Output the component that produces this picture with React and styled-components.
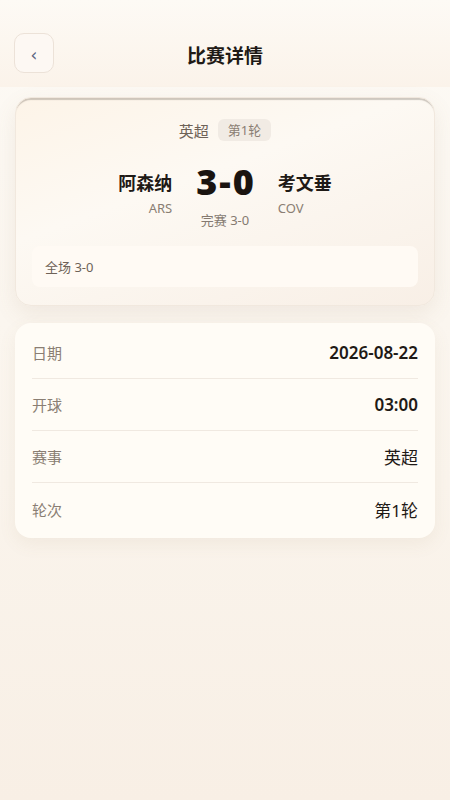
import React from "react";
import styled, { createGlobalStyle } from "styled-components";

const Global = createGlobalStyle`
  html, body { margin: 0; padding: 0; }
  body {
    font-family: "Noto Sans", "Noto Sans CJK SC", sans-serif;
    background: linear-gradient(180deg, #fdfaf5 0%, #faf4ec 60%, #f8efe5 100%);
    min-height: 800px;
    color: #1f1a16;
  }
`;

const Page = styled.div`
  min-height: 800px;
  display: flex;
  flex-direction: column;
`;

const Header = styled.header`
  height: 87px;
  box-sizing: border-box;
  padding: 33px 14px 0;
  display: grid;
  grid-template-columns: 40px 1fr 40px;
  align-items: start;
  background: linear-gradient(180deg, #fdfaf5 0%, #fbf3ea 100%);
`;

const BackButton = styled.button`
  width: 40px;
  height: 40px;
  box-sizing: border-box;
  border: 1px solid #ece2d8;
  border-radius: 10px;
  background: #fdf8f3;
  color: #5b6680;
  font-size: 17px;
  line-height: 1;
  padding: 5px 0 0;
  display: flex;
  align-items: center;
  justify-content: center;
  font-family: "DejaVu Sans", sans-serif;
`;

const Title = styled.h1`
  margin: 3px 0 0;
  height: 40px;
  line-height: 40px;
  text-align: center;
  font-size: 19px;
  font-weight: 700;
  color: #1f1a16;
`;

const Content = styled.main`
  padding: 10px 15px;
  display: flex;
  flex-direction: column;
  gap: 17px;
`;

const ScoreCard = styled.section`
  border-radius: 16px;
  background: linear-gradient(160deg, #fdf4e8 0%, #fdf9f3 40%, #f8efe6 100%);
  border: 1px solid #f1e8de;
  box-shadow: inset 0 3px 1px -1px rgba(120, 108, 96, 0.35), 0 8px 22px rgba(140, 110, 80, 0.1);
  padding: 21px 16px 18px;
  display: flex;
  flex-direction: column;
  align-items: center;
`;

const LeagueRow = styled.div`
  display: flex;
  align-items: center;
  gap: 9px;
  height: 22px;
`;

const League = styled.span`
  font-size: 15px;
  color: #6e6257;
`;

const Chip = styled.span`
  font-size: 13px;
  color: #8a7e73;
  background: #f1ebe4;
  border-radius: 6px;
  padding: 1px 10px;
  line-height: 20px;
`;

const TeamsRow = styled.div`
  margin-top: 19px;
  display: grid;
  grid-template-columns: 1fr auto 1fr;
  column-gap: 22px;
  width: 100%;
  align-items: start;
`;

const Team = styled.div`
  display: flex;
  flex-direction: column;
  align-items: ${(p) => (p.$side === "left" ? "flex-end" : "flex-start")};
`;

const TeamName = styled.div`
  font-size: 18px;
  font-weight: 700;
  line-height: 26px;
  margin-top: 10px;
  color: #1f1a16;
`;

const TeamCode = styled.div`
  font-size: 13px;
  line-height: 18px;
  color: #8a7e73;
  margin-top: 3px;
`;

const ScoreBox = styled.div`
  display: flex;
  flex-direction: column;
  align-items: center;
`;

const Score = styled.div`
  font-size: 36px;
  font-weight: 900;
  line-height: 44px;
  letter-spacing: 2px;
  padding-left: 2px;
  color: #1a1410;
  font-family: "Noto Sans", sans-serif;
`;

const Status = styled.div`
  font-size: 13px;
  line-height: 18px;
  color: #857a70;
  margin-top: 7px;
`;

const SummaryBox = styled.div`
  margin-top: 17px;
  align-self: stretch;
  background: #fffaf4;
  border-radius: 8px;
  padding: 0 13px;
  height: 41px;
  display: flex;
  align-items: center;
  font-size: 13px;
  color: #6e6257;
`;

const InfoCard = styled.section`
  border-radius: 16px;
  background: #fffcf6;
  box-shadow: 0 6px 18px rgba(140, 110, 80, 0.08);
  padding: 4px 17px 3px;
`;

const InfoRow = styled.div`
  height: 52px;
  box-sizing: border-box;
  display: flex;
  align-items: center;
  justify-content: space-between;
  border-bottom: 1px solid #f0e9e1;
  &:last-child { border-bottom: none; }
`;

const Label = styled.span`
  font-size: 15px;
  color: #8a7e73;
`;

const Value = styled.span`
  font-size: 17px;
  font-weight: ${(p) => (p.$strong ? 600 : 400)};
  color: #1f1a16;
`;

const rows = [
  { label: "日期", value: "2026-08-22", strong: true },
  { label: "开球", value: "03:00", strong: true },
  { label: "赛事", value: "英超" },
  { label: "轮次", value: "第1轮" },
];

export default function App() {
  return (
    <Page>
      <Global />
      <Header>
        <BackButton aria-label="返回">‹</BackButton>
        <Title>比赛详情</Title>
        <span />
      </Header>
      <Content>
        <ScoreCard>
          <LeagueRow>
            <League>英超</League>
            <Chip>第1轮</Chip>
          </LeagueRow>
          <TeamsRow>
            <Team $side="left">
              <TeamName>阿森纳</TeamName>
              <TeamCode>ARS</TeamCode>
            </Team>
            <ScoreBox>
              <Score>3-0</Score>
              <Status>完赛 3-0</Status>
            </ScoreBox>
            <Team $side="right">
              <TeamName>考文垂</TeamName>
              <TeamCode>COV</TeamCode>
            </Team>
          </TeamsRow>
          <SummaryBox>全场 3-0</SummaryBox>
        </ScoreCard>
        <InfoCard>
          {rows.map((r) => (
            <InfoRow key={r.label}>
              <Label>{r.label}</Label>
              <Value $strong={r.strong}>{r.value}</Value>
            </InfoRow>
          ))}
        </InfoCard>
      </Content>
    </Page>
  );
}
